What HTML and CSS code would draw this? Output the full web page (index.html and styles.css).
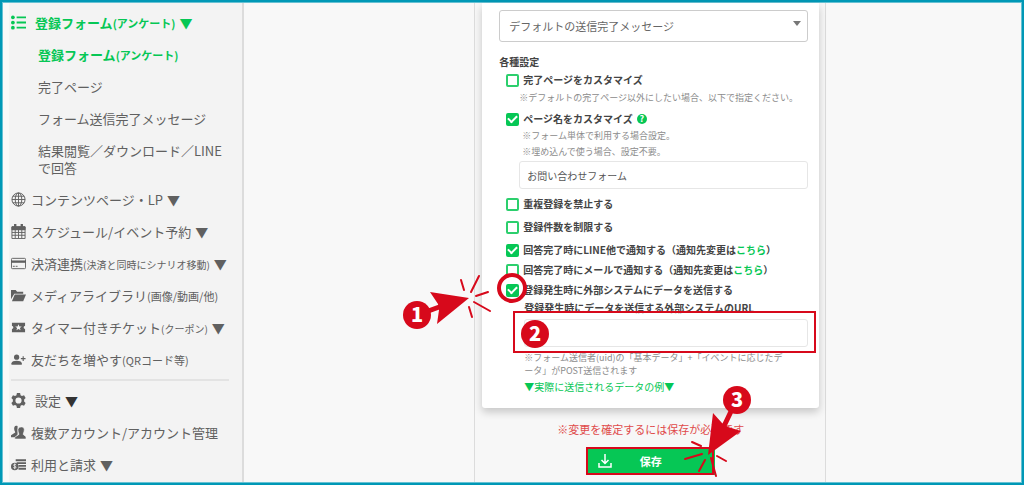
FILE: index.html
```html
<!DOCTYPE html>
<html lang="ja">
    <head>
        <meta charset="utf-8">
        <title>登録フォーム</title>
        <link rel="stylesheet" href="styles.css">
    </head>
    <body>
        <div class="page">
            <nav class="sidebar">
                <a href="#" class="item active wide">
                    <svg class="icon" viewBox="0 0 16 16"><path d="M6 2.500h10M6 8h10M6 13.500h10" stroke="currentColor" stroke-width="2"/><circle cx="2" cy="2.500" r="2"/><circle cx="2" cy="8" r="2"/><circle cx="2" cy="13.500" r="2"/></svg>
                    <span>登録フォーム<small>(アンケート)</small><b>▼</b></span>
                </a>
                <a href="#" class="item sub active"><span>登録フォーム<small>(アンケート)</small></span></a>
                <a href="#" class="item sub">完了ページ</a>
                <a href="#" class="item sub">フォーム送信完了メッセージ</a>
                <a href="#" class="item sub">結果閲覧／ダウンロード／LINEで回答</a>
                <a href="#" class="item">
                    <svg class="icon line" viewBox="0 0 16 16"><circle cx="8" cy="8" r="7"/><ellipse cx="8" cy="8" rx="3.500" ry="7"/><path d="M8 1v14M1 8h14M2 4.500h12M2 11.500h12"/></svg>
                    <span>コンテンツページ・LP<b>▼</b></span>
                </a>
                <a href="#" class="item">
                    <svg class="icon line" viewBox="0 0 16 16"><path d="M1 3h14v12.500H1zM1 6h14M1 9h14M1 12h14M4.500 6v9M8 6v9M11.500 6v9"/><path d="M1 3h14v3H1z" fill="currentColor"/><path d="M4.500 0v4M11.500 0v4" stroke-width="2.500"/></svg>
                    <span>スケジュール/イベント予約<b>▼</b></span>
                </a>
                <a href="#" class="item">
                    <svg class="icon line" viewBox="0 0 16 16"><rect x=".5" y="2.500" width="15" height="11" rx="1"/><path d="M0 6h16" stroke-width="2.500"/><path d="M2 11h2M5 11h2"/></svg>
                    <span>決済連携<small class="narrow">(決済と同時にシナリオ移動)</small><b>▼</b></span>
                </a>
                <a href="#" class="item">
                    <svg class="icon" viewBox="0 0 16 16"><path d="M0 12V2h5l1.500 2H13v2H3.500z"/><path d="M4 7h12l-3 7H1z"/></svg>
                    <span>メディアライブラリ<small>(画像/動画/他)</small></span>
                </a>
                <a href="#" class="item">
                    <svg class="icon" viewBox="0 0 16 16"><path fill-rule="evenodd" d="M1 3h14v3.500a1.500 1.500 0 0 0 0 3V13H1V9.500a1.500 1.500 0 0 0 0-3zM8 4.500L7 7H4.500l2 1.600L5.800 11 8 9.600l2.200 1.400-.7-2.400 2-1.600H9z"/></svg>
                    <span>タイマー付きチケット<small class="narrow">(クーポン)</small><b>▼</b></span>
                </a>
                <a href="#" class="item">
                    <svg class="icon" viewBox="0 0 16 16"><circle cx="6" cy="5.500" r="2.800"/><path d="M.5 13.500v-1.500c0-3.500 11-3.500 11 0v1.500z"/><path d="M13 4.500v5M10.500 7h5" stroke="currentColor" stroke-width="1.200"/></svg>
                    <span>友だちを増やす<small>(QRコード等)</small></span>
                </a>
                <hr class="divider">
                <a href="#" class="item wide">
                    <svg class="icon" viewBox="0 0 16 16"><path fill-rule="evenodd" d="M6.300 0h3.400l.5 2.300 1.500.8 2.200-.7 1.700 2.900L14 7v2l1.600 1.700-1.700 2.900-2.200-.7-1.500.8-.5 2.300H6.300l-.5-2.300-1.500-.8-2.200.7-1.700-2.900L2 9V7L.4 5.300l1.700-2.900 2.200.7 1.500-.8zM8 4.700a3.300 3.300 0 1 0 0 6.600 3.300 3.300 0 0 0 0-6.600z"/></svg>
                    <span>設定<b class="dark">▼</b></span>
                </a>
                <a href="#" class="item">
                    <svg class="icon" viewBox="0 0 16 16"><path d="M7 1C4 0 3 2 3.500 5c.3 1.500 1 2 1 3L0 11v2h5l2-3z"/><path d="M11 2c3 0 3.500 2 3 4.500-.2 1.500-1 2.500-1 3.500l3 2.500V15H4v-2l4.500-3c0-1-1-2-1-3.500C7 4 8 2 11 2z" stroke="#f3f3f3" stroke-width=".7"/></svg>
                    <span>複数アカウント/アカウント管理</span>
                </a>
                <a href="#" class="item">
                    <svg class="icon" viewBox="0 0 16 16"><path d="M5 3.500h11M6 6.500h10M8 9.500h8M8 12.500h8" stroke="currentColor" stroke-width="2"/><circle cx="4" cy="10" r="4"/><path d="M5.500 8.500C4 7 2.500 8 3 9s2.500 1 2.300 2-1.800 1-2.800.2M4 7v6" fill="none" stroke="#f3f3f3" stroke-width=".9"/></svg>
                    <span>利用と請求<b>▼</b></span>
                </a>
            </nav>

            <main class="column">
                <form class="card">
                    <div class="select_wrap">
                        <select class="field select" aria-label="送信完了メッセージ">
                            <option>デフォルトの送信完了メッセージ</option>
                        </select>
                    </div>
                    <h2 class="heading">各種設定</h2>

                    <div class="row">
                        <input type="checkbox" id="custom_done" class="check">
                        <label for="custom_done">完了ページをカスタマイズ</label>
                    </div>
                    <p class="note wide_note">※デフォルトの完了ページ以外にしたい場合、以下で指定ください。</p>

                    <div class="row titled">
                        <input type="checkbox" id="custom_name" class="check" checked>
                        <label for="custom_name">ページ名をカスタマイズ</label>
                        <span class="help">?</span>
                    </div>
                    <p class="note">※フォーム単体で利用する場合設定。</p>
                    <p class="note">※埋め込んで使う場合、設定不要。</p>
                    <input type="text" class="field page_name" aria-label="ページ名" value="お問い合わせフォーム">

                    <div class="row spaced">
                        <input type="checkbox" id="no_dup" class="check">
                        <label for="no_dup">重複登録を禁止する</label>
                    </div>
                    <div class="row spaced">
                        <input type="checkbox" id="limit" class="check">
                        <label for="limit">登録件数を制限する</label>
                    </div>
                    <div class="row spaced">
                        <input type="checkbox" id="notify_line" class="check" checked>
                        <label for="notify_line">回答完了時にLINE他で通知する（通知先変更は<a href="#">こちら</a>）</label>
                    </div>
                    <div class="row tight">
                        <input type="checkbox" id="notify_mail" class="check">
                        <label for="notify_mail">回答完了時にメールで通知する（通知先変更は<a href="#">こちら</a>）</label>
                    </div>
                    <div class="row tight">
                        <input type="checkbox" id="send_data" class="check" checked>
                        <label for="send_data">登録発生時に外部システムにデータを送信する</label>
                    </div>

                    <div class="external">
                        <label for="url">登録発生時にデータを送信する外部システムのURL</label>
                        <input type="text" id="url" class="field">
                        <p class="hint">※フォーム送信者(uid)の「基本データ」+「イベントに応じたデータ」がPOST送信されます</p>
                        <a href="#" class="example">▼実際に送信されるデータの例▼</a>
                    </div>
                </form>

                <p class="warning">※変更を確定するには保存が必要です</p>
                <button type="button" class="save">
                    <svg viewBox="0 0 14 14"><path d="M7 0v9M3.500 6L7 9.500 10.500 6M1 9v4h12V9"/></svg>
                    <span>保存</span>
                </button>

                <!-- step markers drawn over the form -->
                <svg class="steps" viewBox="400 0 430 485">
                    <g class="stroke">
                        <circle cx="512" cy="288" r="13" stroke-width="4"/>
                        <rect x="514" y="312" width="301" height="40"/>
                        <rect x="587" y="448" width="126" height="26"/>
                        <path d="M461 280l3 10M479 276l-8 16M488 292l-12 4M474 302l16 9M469 307l3 10"/>
                        <path d="M692 442l9 4M685 459l17-5M705 460l-6 11M717 456l9 5M711 458l5 18"/>
                        <path d="M420 314l22-8M735 403l-10 21" stroke-width="5"/>
                    </g>
                    <path d="M469 298l-39-6 8 12 1 6-2 14zM708 455l5-42 9 10 6 4 13 4z"/>
                    <circle cx="417" cy="315" r="14"/>
                    <circle cx="535" cy="334" r="14"/>
                    <circle cx="737" cy="400" r="14"/>
                    <text x="417" y="322">1</text>
                    <text x="535" y="341">2</text>
                    <text x="737" y="407">3</text>
                </svg>
            </main>
        </div>
    </body>
</html>
```
FILE: styles.css
```css
* {
    box-sizing: border-box;
}
body {
    margin: 0;
    background: #0098b6;
    padding: 2px;
    font-family: "Noto Sans CJK JP", sans-serif;
    color: #444;
}
a {
    color: #06c755;
    text-decoration: none;
}
.page {
    display: grid;
    grid-template-columns: 241px 13fr 352px 11fr;
    min-height: calc(100vh - 4px);
    border: 1px solid #66c1d3;
    background: #f8f8f8;
}

/* sidebar */
.sidebar {
    margin-left: 6px;
    padding: 4px 13px 0 2px;
    background: #f3f3f3;
    border-right: 2px solid #dcdcdc;
}
.item {
    display: flex;
    align-items: center;
    gap: 5px;
    padding: 7px 0 8px;
    font-size: 13px;
    line-height: 17px;
    color: #606060;
}
.item span {
    white-space: nowrap;
}
.item small {
    font-size: 11px;
    line-height: 1;
}
.item .narrow {
    font-size: 10px;
}
.item b {
    margin-left: 4px;
    font-weight: normal;
    line-height: 1;
}
.item .dark {
    color: #333;
}
.wide {
    gap: 9px;
}
.sub {
    padding-left: 27px;
}
.item.active {
    color: #06c755;
    font-weight: bold;
}
.icon {
    flex: none;
    width: 15px;
    height: 15px;
    fill: currentColor;
}
.line {
    fill: none;
    stroke: currentColor;
}
.divider {
    height: 2px;
    margin: 3px 0 4px;
    border: 0;
    background: #e3e3e3;
}

/* form */
.column {
    grid-column: 3;
    position: relative;
    padding: 0 6px 0 7px;
    border: solid #dcdcdc;
    border-width: 0 1px;
    background: #f7f7f7;
}
.card {
    padding: 7px 11px 12px 17px;
    border-radius: 0 0 3px 3px;
    background: #fff;
    box-shadow: 0 4px 8px rgba(0, 0, 0, 0.2);
    font-size: 10px;
    line-height: 18px;
}
.field {
    display: block;
    width: 100%;
    height: 28px;
    padding: 0 7px;
    border: 1px solid #e6e6e6;
    border-radius: 3px;
    background: #fff;
    font: 10px "Noto Sans CJK JP", sans-serif;
    color: #555;
}
.select_wrap {
    position: relative;
}
.select_wrap::after {
    content: "";
    position: absolute;
    top: 11px;
    right: 7px;
    border: solid transparent;
    border-width: 5px 4px 0;
    border-top-color: #777;
}
.select {
    appearance: none;
    height: 32px;
    padding: 0 9px;
    border-color: #ccc;
    font-size: 11px;
    color: #666;
}
.heading {
    margin: 11px 0 0;
    font-size: 10px;
    line-height: 18px;
}
.row {
    display: flex;
    align-items: center;
    gap: 4px;
    padding-left: 7px;
    font-weight: bold;
    white-space: nowrap;
}
.titled {
    margin-top: 4px;
}
.spaced {
    margin-top: 5px;
}
.tight {
    margin-top: 2px;
}
.check {
    appearance: none;
    flex: none;
    display: grid;
    place-items: center;
    width: 13px;
    height: 13px;
    margin: 0;
    border: 2px solid #2ccf6d;
    border-radius: 2px;
    background: #fff;
}
.check:checked {
    border-color: #06c755;
    background: #06c755;
}
.check:checked::before {
    content: "";
    width: 7px;
    height: 4px;
    border: solid #fff;
    border-width: 0 0 2px 2px;
    transform: translateY(-1px) rotate(-45deg);
}
.help {
    width: 10px;
    height: 10px;
    border-radius: 50%;
    background: #06c755;
    color: #fff;
    font: bold 9px/10px "Noto Sans CJK JP", sans-serif;
    text-align: center;
}
.note,
.hint {
    margin: 0 0 0 23px;
    font-size: 9px;
    line-height: 16px;
    color: #8c8c8c;
}
.wide_note {
    margin: 1px 0 0 20px;
    white-space: nowrap;
}
.page_name {
    width: auto;
    min-width: calc(100% - 20px);
    margin: 1px 0 6px 20px;
}
.external {
    padding-left: 25px;
}
.external label {
    display: block;
    font-weight: bold;
    white-space: nowrap;
}
.external .field {
    margin-top: 2px;
}
.hint {
    margin: 4px 0 1px;
    padding-right: 20px;
    line-height: 13px;
    line-break: anywhere;
}
.example {
    display: block;
}
.warning {
    margin: 12px 0 9px;
    font-size: 11px;
    line-height: 18px;
    text-align: center;
    color: #e04a4a;
}
.save {
    display: grid;
    grid-template-columns: 14px 1fr 14px;
    align-items: center;
    width: 128px;
    height: 28px;
    margin: 0 auto;
    padding: 0 11px;
    border: 0;
    background: #06c755;
    color: #fff;
    font: bold 11px "Noto Sans CJK JP", sans-serif;
}
.save svg {
    width: 14px;
    height: 14px;
    fill: none;
    stroke: #fff;
    stroke-width: 1.5;
}

/* step markers */
.steps {
    position: absolute;
    top: -3px;
    left: -75px;
    width: 430px;
    height: 485px;
    fill: #d7091b;
    pointer-events: none;
}
.steps .stroke {
    fill: none;
    stroke: #d7091b;
    stroke-width: 2;
    stroke-linecap: round;
}
.steps text {
    fill: #fff;
    font: 900 20px "Noto Sans CJK JP", sans-serif;
    text-anchor: middle;
}
```
